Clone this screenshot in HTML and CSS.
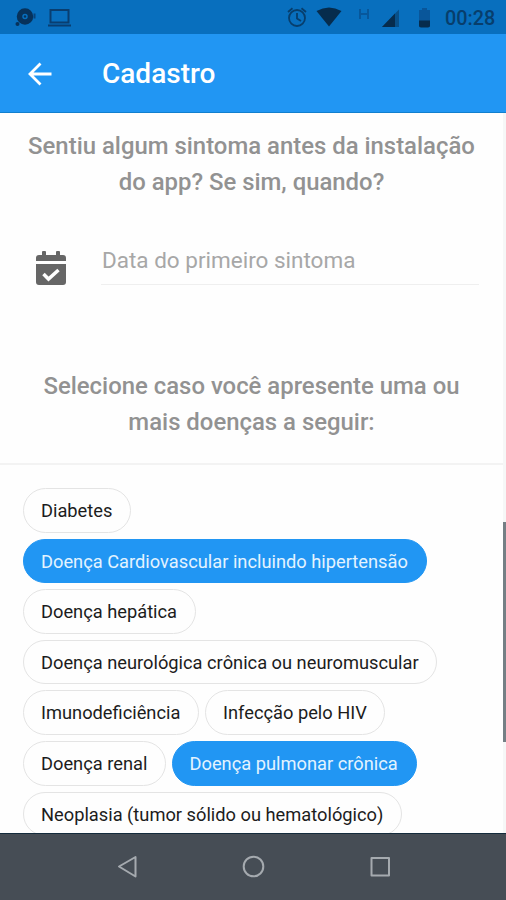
FILE: index.html
```html
<!DOCTYPE html>
<html lang="pt-BR">
<head>
<meta charset="utf-8">
<title>Cadastro</title>
<link rel="stylesheet" href="styles.css">
</head>
<body>
<div class="phone">
  <div class="status">
    <svg class="status-left" width="76" height="34" viewBox="0 0 76 34">
      <circle cx="25" cy="16.500" r="5.500" fill="none" stroke="#07325b" stroke-width="5.500"/>
      <circle cx="25" cy="16.500" r="1.200" fill="#07325b"/>
      <circle cx="17.500" cy="24" r="2" fill="#07325b"/>
      <path d="M34.500 13.500v5" stroke="#07437b" stroke-width="2"/>
      <path d="M50.500 10h18v12.500h-18zM48 25.500h23" fill="none" stroke="#093e70" stroke-width="2"/>
    </svg>
    <svg class="status-right" width="150" height="34" viewBox="285 0 150 34">
      <g fill="none" stroke="#073e6c" stroke-width="1.800">
        <circle cx="297" cy="18" r="8"/>
        <path d="M297 13v5.500l4 2.500M288 12l4.500-3.700M306 12l-4.500-3.700"/>
      </g>
      <path d="M316.500 11Q329 4 341.500 11L329 26.500z" fill="#062c4d"/>
      <path d="M360 9v10M368 9v10M360 14h8" fill="none" stroke="#07579b" stroke-width="2"/>
      <path d="M399 9.500V27h-17z" fill="#085089"/>
      <path d="M395 13.500V27h-13z" fill="#062c4d"/>
      <path d="M419 10h3V8h5v2h3v17h-11z" fill="#09569a"/>
      <path d="M419 20.500h11v5q0 2-2 2h-7q-2 0-2-2z" fill="#062c4d"/>
    </svg>
    <span class="clock">00:28</span>
  </div>
  <header class="bar">
    <svg class="back" width="24" height="24" viewBox="0 0 24 24"><path d="M23.500 12H2.500M12.500 1.500L2 12l10.500 10.500" fill="none" stroke="#fff" stroke-width="2.800"/></svg>
    <h1 class="title">Cadastro</h1>
  </header>
  <main class="content">
    <section class="form">
      <h2 class="question q1">Sentiu algum sintoma antes da instalação<br>do app? Se sim, quando?</h2>
      <div class="date">
        <svg width="32" height="36" viewBox="0 0 32 36">
          <path d="M1 10V7q0-3 3-3h3V1q0-1 1-1h2q1 0 1 1v3h10V1q0-1 1-1h2q1 0 1 1v3h3q3 0 3 3v3zM1 13h30v18q0 3-3 3H4q-3 0-3-3z" fill="#666"/>
          <path d="M8.500 23l5 5L23.500 19" fill="none" stroke="#fff" stroke-width="3.500"/>
        </svg>
        <div class="field">Data do primeiro sintoma</div>
      </div>
      <h2 class="question q2">Selecione caso você apresente uma ou<br>mais doenças a seguir:</h2>
      <div class="chips">
        <div class="row"><span class="chip w1">Diabetes</span></div>
        <div class="row"><span class="chip on w2">Doença Cardiovascular incluindo hipertensão</span></div>
        <div class="row"><span class="chip w3">Doença hepática</span></div>
        <div class="row"><span class="chip w4">Doença neurológica crônica ou neuromuscular</span></div>
        <div class="row"><span class="chip w5">Imunodeficiência</span><span class="chip w6">Infecção pelo HIV</span></div>
        <div class="row"><span class="chip w7">Doença renal</span><span class="chip on w8">Doença pulmonar crônica</span></div>
        <div class="row"><span class="chip w9">Neoplasia (tumor sólido ou hematológico)</span></div>
      </div>
    </section>
    <div class="track"><div class="thumb"></div></div>
  </main>
  <nav class="nav">
    <svg width="506" height="66" viewBox="0 834 506 66" fill="none" stroke="#a5aaaf" stroke-width="2" stroke-linejoin="round">
      <path d="M119 866.500L135.500 857v19.500z"/>
      <circle cx="253.500" cy="866.500" r="9.800"/>
      <rect x="371.500" y="858" width="17.500" height="17.500"/>
    </svg>
  </nav>
</div>
</body>
</html>
```
FILE: styles.css
```css
* { box-sizing: border-box; }
body { margin: 0; font-family: Roboto, "Liberation Sans", sans-serif; }
.phone { width: 506px; height: 900px; display: flex; flex-direction: column; overflow: hidden; background: #fefefe; }
.status { height: 34px; flex: none; background: #086fbe; display: flex; align-items: center; }
.status svg { display: block; }
.status-right { margin-left: 209px; }
.clock { margin-left: 10px; padding-top: 3px; font-size: 19.800px; font-weight: 500; color: #073e6c; line-height: 24px; white-space: nowrap; }
.bar { height: 79px; flex: none; background: #2196f3; border-bottom: 1px solid #127fce; display: flex; align-items: center; }
.back { margin: 1px 0 0 28px; }
.title { margin: 2px 0 0 50px; font-size: 28px; font-weight: 500; line-height: 34px; color: #fff; }
.content { height: 720px; flex: none; display: flex; overflow: hidden; }
.form { width: 503px; flex: none; }
.track { width: 3px; background: #f6f7f7; padding-top: 409px; }
.thumb { height: 220px; background: #747f85; }
.question { margin: 0; text-align: center; font-size: 23.900px; font-weight: 500; line-height: 36px; color: #929292; white-space: nowrap; }
.q1 { padding-top: 15px; }
.date { display: flex; padding: 51px 24px 0 35px; height: 86px; }
.date svg { display: block; flex: none; }
.field { margin-left: 34px; padding-left: 1px; flex: 1; height: 34px; border-bottom: 1px solid #efefef; font-size: 22.500px; line-height: 18px; color: #a7a7a7; white-space: nowrap; }
.q2 { height: 180px; padding-top: 83px; margin-top: -1px; border-bottom: 2px solid #f3f3f3; }
.chips { padding: 23px 0 0 23px; display: flex; flex-direction: column; gap: 6px; }
.row { display: flex; gap: 6px; height: 44.600px; }
.chip { height: 44.600px; border: 1px solid #e4e4e4; border-radius: 23px; padding-left: 17px; font-size: 18.270px; line-height: 43px; color: #1c1c1c; white-space: nowrap; flex: none; }
.on { background: #2196f3; border-color: #2196f3; color: #e3f3ff; }
.w1 { width: 107.500px; }
.w2 { width: 403.500px; }
.w3 { width: 172.500px; }
.w4 { width: 414px; }
.w5 { width: 176px; }
.w6 { width: 180px; }
.w7 { width: 142.500px; }
.w8 { width: 245.500px; }
.w9 { width: 379px; }
.nav { height: 67px; flex: none; background: #464d55; border-top: 1px solid #142b3c; }
.nav svg { display: block; }
```
